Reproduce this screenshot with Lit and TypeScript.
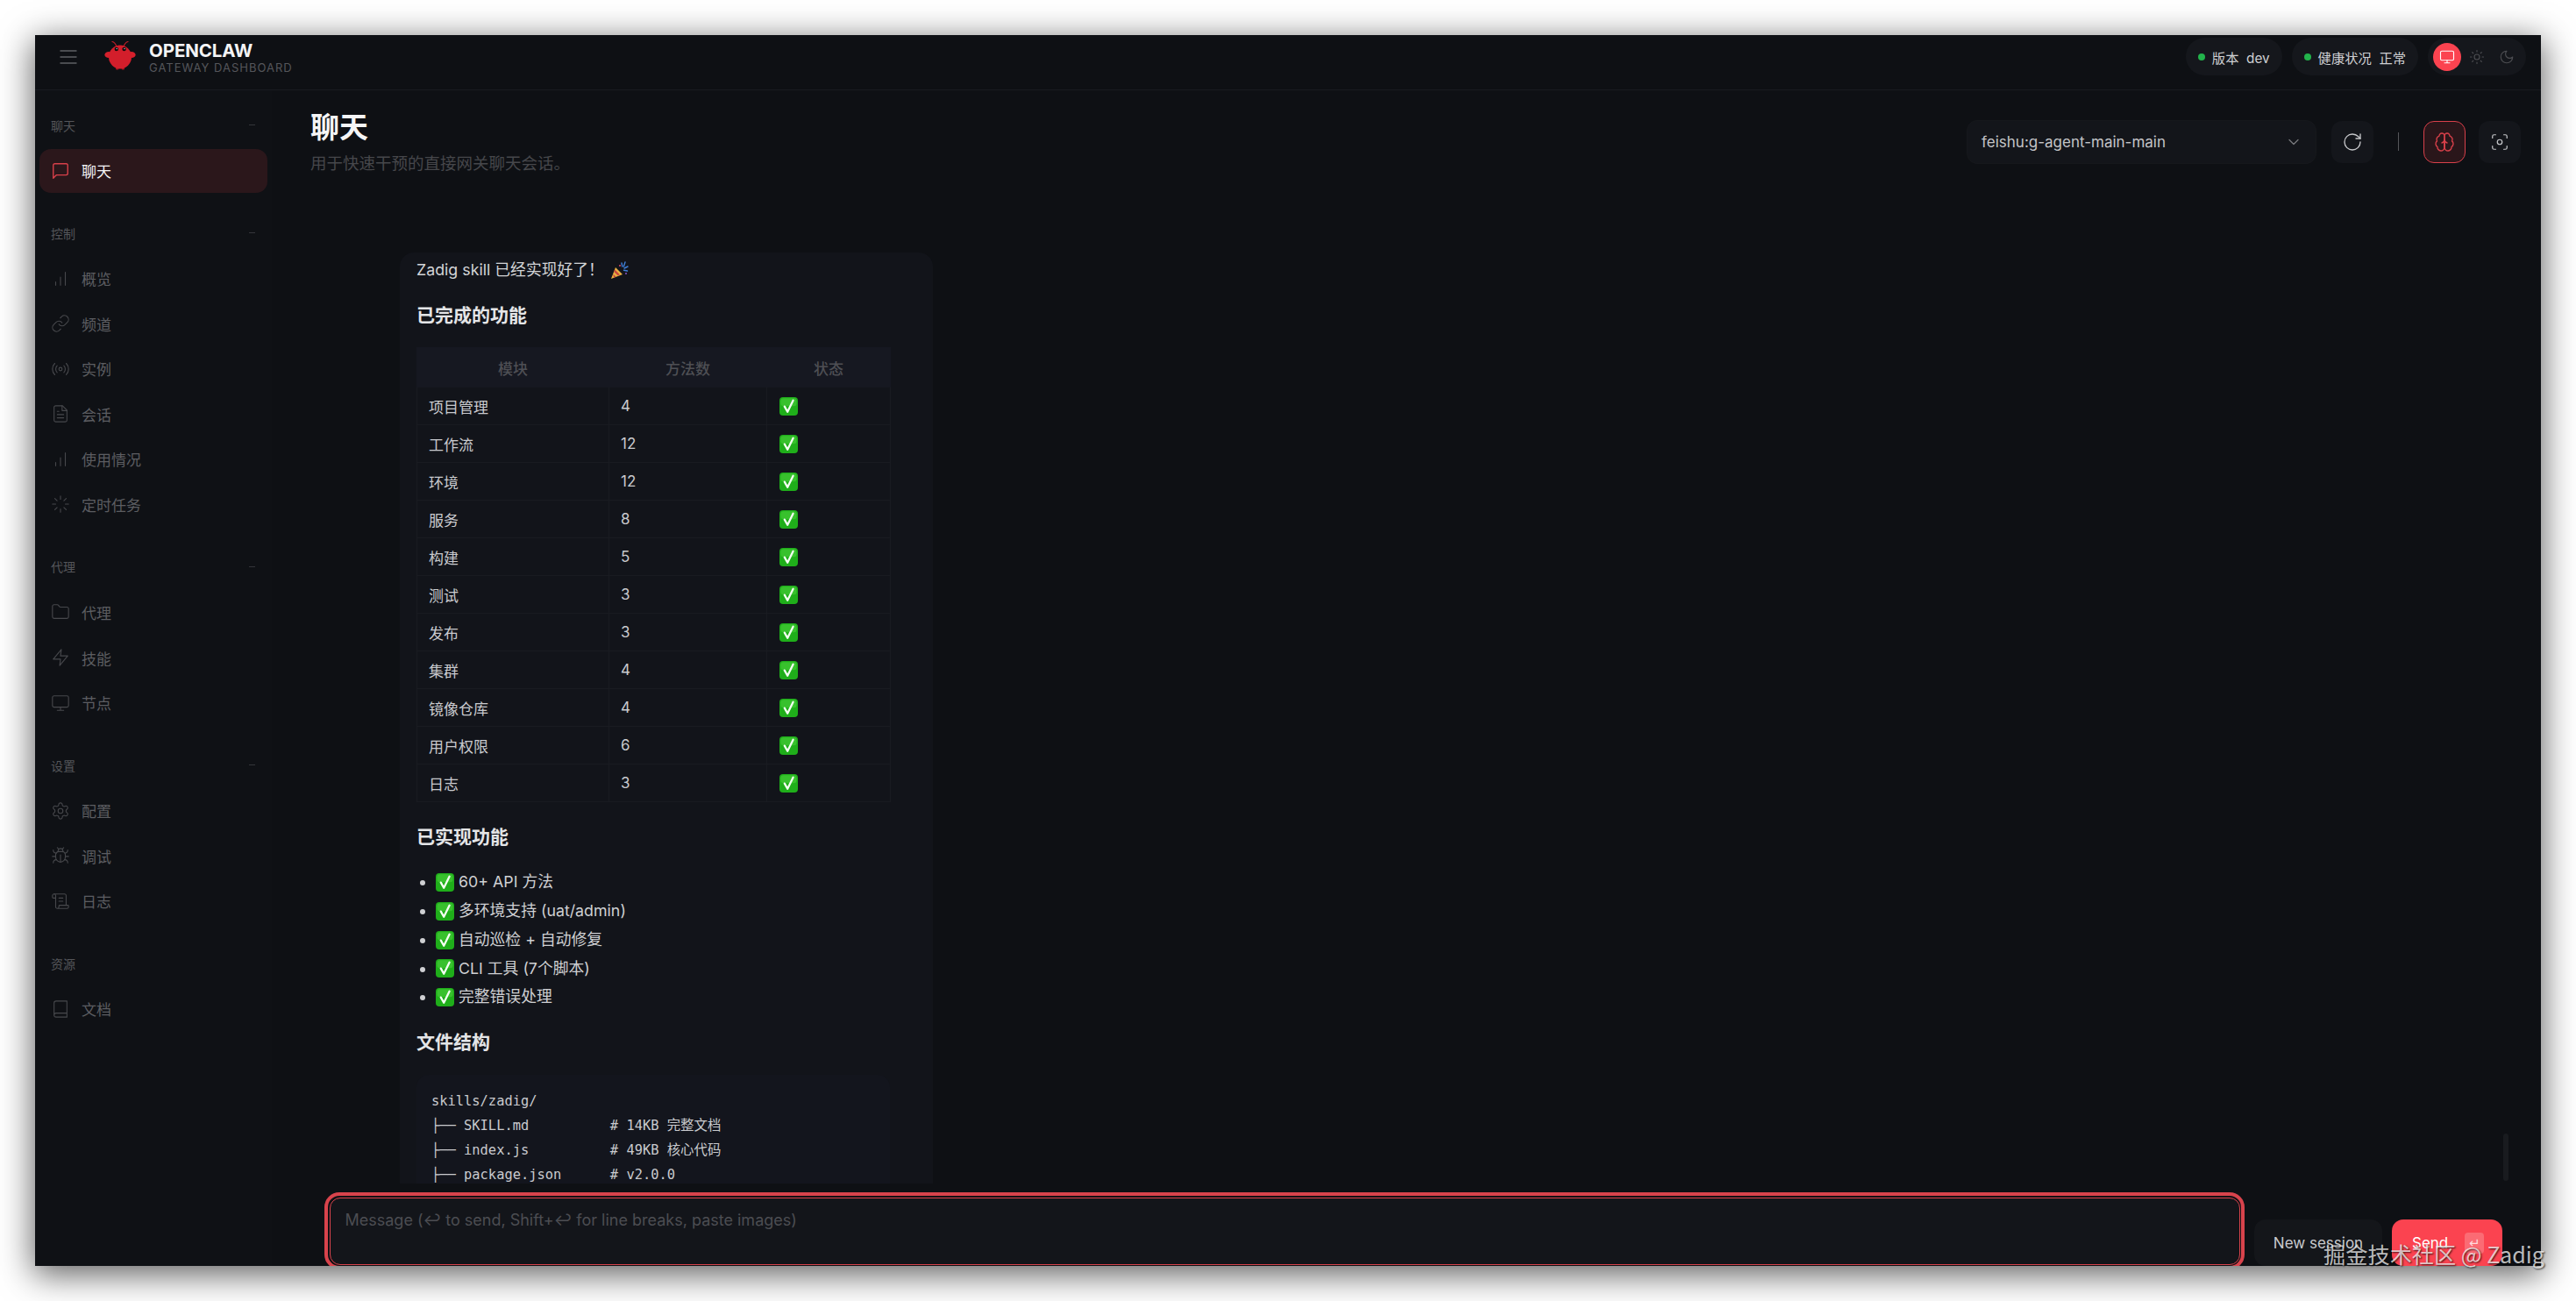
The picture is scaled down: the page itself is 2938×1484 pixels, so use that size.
import { LitElement, html, css, svg } from "lit";
import { customElement } from "lit/decorators.js";

const ICONS: Record<string, any> = {
  chat: svg`<path d="M21 15a2 2 0 0 1-2 2H7l-4 4V5a2 2 0 0 1 2-2h14a2 2 0 0 1 2 2z"/>`,
  bars: svg`<path d="M12 20V10M18 20V4M6 20v-4"/>`,
  link: svg`<path d="M10 13a5 5 0 0 0 7.54.54l3-3a5 5 0 0 0-7.07-7.07l-1.72 1.71"/><path d="M14 11a5 5 0 0 0-7.54-.54l-3 3a5 5 0 0 0 7.07 7.07l1.71-1.71"/>`,
  radio: svg`<path d="M4.9 19.1C1 15.2 1 8.8 4.9 4.9"/><path d="M7.8 16.2c-2.3-2.3-2.3-6.1 0-8.5"/><circle cx="12" cy="12" r="2"/><path d="M16.2 7.8c2.3 2.3 2.3 6.1 0 8.5"/><path d="M19.1 4.9C23 8.8 23 15.1 19.1 19"/>`,
  file: svg`<path d="M14.5 2H6a2 2 0 0 0-2 2v16a2 2 0 0 0 2 2h12a2 2 0 0 0 2-2V7.5L14.5 2z"/><path d="M14 2v6h6M16 13H8M16 17H8M10 9H8"/>`,
  loader: svg`<path d="M12 2v4M12 18v4M4.93 4.93l2.83 2.83M16.24 16.24l2.83 2.83M2 12h4M18 12h4M4.93 19.07l2.83-2.83M16.24 7.76l2.83-2.83"/>`,
  folder: svg`<path d="M4 20h16a2 2 0 0 0 2-2V8a2 2 0 0 0-2-2h-7.93a2 2 0 0 1-1.66-.9l-.82-1.2A2 2 0 0 0 7.93 3H4a2 2 0 0 0-2 2v13c0 1.1.9 2 2 2Z"/>`,
  zap: svg`<polygon points="13 2 3 14 12 14 11 22 21 10 12 10 13 2"/>`,
  monitor: svg`<rect x="2" y="3" width="20" height="14" rx="2"/><path d="M8 21h8M12 17v4"/>`,
  gear: svg`<path d="M12.22 2h-.44a2 2 0 0 0-2 2v.18a2 2 0 0 1-1 1.73l-.43.25a2 2 0 0 1-2 0l-.15-.08a2 2 0 0 0-2.73.73l-.22.38a2 2 0 0 0 .73 2.73l.15.1a2 2 0 0 1 1 1.72v.51a2 2 0 0 1-1 1.74l-.15.09a2 2 0 0 0-.73 2.73l.22.38a2 2 0 0 0 2.73.73l.15-.08a2 2 0 0 1 2 0l.43.25a2 2 0 0 1 1 1.73V20a2 2 0 0 0 2 2h.44a2 2 0 0 0 2-2v-.18a2 2 0 0 1 1-1.73l.43-.25a2 2 0 0 1 2 0l.15.08a2 2 0 0 0 2.73-.73l.22-.39a2 2 0 0 0-.73-2.73l-.15-.08a2 2 0 0 1-1-1.74v-.5a2 2 0 0 1 1-1.74l.15-.09a2 2 0 0 0 .73-2.73l-.22-.38a2 2 0 0 0-2.73-.73l-.15.08a2 2 0 0 1-2 0l-.43-.25a2 2 0 0 1-1-1.73V4a2 2 0 0 0-2-2z"/><circle cx="12" cy="12" r="3"/>`,
  bug: svg`<path d="M8 2l1.88 1.88M14.12 3.88 16 2M9 7.13v-1a3 3 0 1 1 6 0v1"/><path d="M12 20c-3.3 0-6-2.7-6-6v-3a4 4 0 0 1 4-4h4a4 4 0 0 1 4 4v3c0 3.3-2.7 6-6 6"/><path d="M12 20v-9M6.53 9C4.6 8.8 3 7.1 3 5M6 13H2M3 21c0-2.1 1.7-3.9 3.8-4M20.97 5c0 2.1-1.6 3.8-3.5 4M22 13h-4M17.2 17c2.1.1 3.8 1.9 3.8 4"/>`,
  scroll: svg`<path d="M15 12h-5M15 8h-5M19 17V5a2 2 0 0 0-2-2H4"/><path d="M8 21h12a2 2 0 0 0 2-2v-1a1 1 0 0 0-1-1H11a1 1 0 0 0-1 1v1a2 2 0 1 1-4 0V5a2 2 0 1 0-4 0v2a1 1 0 0 0 1 1h3"/>`,
  book: svg`<path d="M4 19.5v-15A2.5 2.5 0 0 1 6.5 2H20v20H6.5a2.5 2.5 0 0 1 0-5H20"/>`,
  refresh: svg`<path d="M21 12a9 9 0 1 1-9-9c2.52 0 4.93 1 6.74 2.74L21 8"/><path d="M21 3v5h-5"/>`,
  brain: svg`<path d="M12 5a3 3 0 1 0-5.997.125 4 4 0 0 0-2.526 5.77 4 4 0 0 0 .556 6.588A4 4 0 1 0 12 18Z"/><path d="M12 5a3 3 0 1 1 5.997.125 4 4 0 0 1 2.526 5.77 4 4 0 0 1-.556 6.588A4 4 0 1 1 12 18Z"/><path d="M15 13a4.5 4.5 0 0 1-3-4 4.5 4.5 0 0 1-3 4M12 18V9"/>`,
  focus: svg`<path d="M3 7V5a2 2 0 0 1 2-2h2M17 3h2a2 2 0 0 1 2 2v2M21 17v2a2 2 0 0 1-2 2h-2M7 21H5a2 2 0 0 1-2-2v-2"/><circle cx="12" cy="12" r="3"/>`,
  chevron: svg`<path d="m6 9 6 6 6-6"/>`,
  sun: svg`<circle cx="12" cy="12" r="4"/><path d="M12 2v2M12 20v2M4.93 4.93l1.41 1.41M17.66 17.66l1.41 1.41M2 12h2M20 12h2M6.34 17.66l-1.41 1.41M19.07 4.93l-1.41 1.41"/>`,
  moon: svg`<path d="M12 3a6 6 0 0 0 9 9 9 9 0 1 1-9-9Z"/>`,
  menu: svg`<path d="M3 5h18M3 12h18M3 19h18"/>`,
};

const icon = (name: string, cls = "") =>
  html`<svg class="ic ${cls}" viewBox="0 0 24 24" fill="none" stroke="currentColor" stroke-width="1.5" stroke-linecap="round" stroke-linejoin="round">${ICONS[name]}</svg>`;

const check = html`<svg class="emoji" viewBox="0 0 21 21"><rect width="21" height="21" rx="4" fill="#1fae1a"/><rect x="1.5" y="1.2" width="18" height="9" rx="3" fill="#4cd23e" opacity=".55"/><path d="M5.8 10.6l3.4 6.2L15.6 3.8" fill="none" stroke="#f4fff2" stroke-width="2.3" stroke-linecap="round" stroke-linejoin="round"/></svg>`;

const party = html`<svg class="party" viewBox="0 0 21 21"><path d="M1 20l5-13 8 8z" fill="#e8b040"/><path d="M3.2 14.5l3.4 3.2-2.4 1zM5.2 9.6l5.8 5.6-2.4 1-4.3-4.2z" fill="#c7453f"/><path d="M13 2l.8 4M17 1l-1.6 5M20 6l-4 2M19.5 11l-4-.8" stroke="#3f7fd8" stroke-width="1.4" fill="none" stroke-linecap="round"/><circle cx="11" cy="5" r="1" fill="#d8486a"/><circle cx="18" cy="14" r="1" fill="#8a55c8"/></svg>`;

const NAV = [
  { label: "聊天", items: [["chat", "聊天", true]] },
  { label: "控制", items: [["bars", "概览"], ["link", "频道"], ["radio", "实例"], ["file", "会话"], ["bars", "使用情况"], ["loader", "定时任务"]] },
  { label: "代理", items: [["folder", "代理"], ["zap", "技能"], ["monitor", "节点"]] },
  { label: "设置", items: [["gear", "配置"], ["bug", "调试"], ["scroll", "日志"]] },
  { label: "资源", noDash: true, items: [["book", "文档"]] },
] as { label: string; noDash?: boolean; items: any[][] }[];

const ROWS = [
  ["项目管理", "4"], ["工作流", "12"], ["环境", "12"], ["服务", "8"], ["构建", "5"], ["测试", "3"],
  ["发布", "3"], ["集群", "4"], ["镜像仓库", "4"], ["用户权限", "6"], ["日志", "3"],
];

const FEATURES = ["60+ API 方法", "多环境支持 (uat/admin)", "自动巡检 + 自动修复", "CLI 工具 (7个脚本)", "完整错误处理"];

const CODE = `skills/zadig/
├── SKILL.md          # 14KB 完整文档
├── index.js          # 49KB 核心代码
├── package.json      # v2.0.0`;

@customElement("app-root")
export class AppRoot extends LitElement {
  static styles = css`
    :host {
      display: block;
      position: relative;
      height: 100vh;
      box-sizing: border-box;
      padding: 40px;
      background: #fff;
      overflow: hidden;
      font-family: Inter, "Noto Sans CJK SC", sans-serif;
      color: #d6d7da;
    }
    * { box-sizing: border-box; }
    .window {
      height: 1404px;
      display: flex;
      flex-direction: column;
      overflow: hidden;
      background: #0e1014;
      box-shadow: 0 8px 36px 2px rgba(0, 0, 0, 0.62);
    }
    .ic { display: block; width: 20px; height: 20px; flex: none; }

    /* header */
    .topbar {
      flex: none;
      height: 63px;
      display: flex;
      align-items: center;
      padding: 0 17px 13px 26px;
      border-bottom: 1px solid #191b20;
    }
    .menu { width: 24px; height: 24px; color: #5f6064; }
    .logo { width: 38px; height: 36px; margin: 0 0 4px 28px; flex: none; }
    .brand { margin: 4px 0 0 14px; display: flex; flex-direction: column; }
    .brand b { font-size: 20.5px; line-height: 22px; font-weight: 700; color: #f4f4f5; letter-spacing: -0.1px; }
    .brand span { font-size: 13px; line-height: 17px; letter-spacing: 1px; color: #55565b; }
    .spacer { flex: 1; }
    .pill {
      height: 43px;
      display: flex;
      align-items: center;
      gap: 8px;
      padding: 0 14px;
      border-radius: 22px;
      background: #15171c;
      font-size: 15.3px;
      color: #cfd0d3;
      margin-right: 11px;
      white-space: pre;
    }
    .dot { width: 8px; height: 8px; border-radius: 50%; background: #22b34b; }
    .theme {
      height: 43px;
      width: 112px;
      display: flex;
      align-items: center;
      gap: 2px;
      padding: 0 6px;
      border-radius: 22px;
      background: #15171c;
    }
    .theme span { width: 32px; height: 32px; border-radius: 50%; display: grid; place-items: center; color: #4d4e52; }
    .theme span .ic { width: 18px; height: 18px; }
    .theme .on { background: #fb4350; color: #fff; }

    /* body */
    .body { flex: 1; min-height: 0; display: flex; }
    .side { flex: none; width: 270px; padding: 25.5px 5px 0; background: #0f1115; }
    .group { margin-bottom: 32px; }
    .group-label {
      height: 28px;
      margin-bottom: 13px;
      padding: 0 14px 0 13px;
      display: flex;
      align-items: center;
      justify-content: space-between;
      font-size: 14px;
      color: #55565a;
    }
    .group-label i { width: 7px; height: 1px; background: #34353a; }
    .item {
      height: 50px;
      margin-bottom: 1.6px;
      padding-left: 13px;
      display: flex;
      align-items: center;
      gap: 13px;
      font-size: 17px;
      color: #5c5d61;
      border-radius: 13px;
    }
    .item .ic { width: 22px; height: 22px; color: #47484c; stroke-width: 1.2; }
    .item.active { background: #2b171b; color: #f5f5f6; }
    .item.active .ic { color: #d8404a; stroke-width: 1.5; }

    .main { position: relative; flex: 1; min-width: 0; display: flex; flex-direction: column; }
    .head {
      flex: none;
      display: flex;
      align-items: center;
      justify-content: space-between;
      padding: 22px 23px 0 44px;
    }
    .head h1 { margin: 0; font-size: 33px; line-height: 40px; font-weight: 600; color: #f5f5f6; }
    .head p { margin: 9px 0 0; font-size: 18.5px; line-height: 24px; color: #46474b; }
    .controls { display: flex; align-items: center; }
    .select {
      width: 399px;
      height: 50px;
      display: flex;
      align-items: center;
      justify-content: space-between;
      padding: 0 15px 0 16px;
      border-radius: 12px;
      border: 1px solid #16181c;
      background: #13151a;
      font-size: 17px;
      color: #c3c4c7;
    }
    .select .ic { width: 20px; height: 20px; color: #77787c; }
    .btn {
      width: 48px;
      height: 48px;
      display: grid;
      place-items: center;
      border-radius: 12px;
      background: #14161b;
      color: #c5c6c9;
    }
    .btn .ic { width: 24px; height: 24px; stroke-width: 1.35; }
    .btn.refresh { margin-left: 17px; }
    .sep { width: 1px; height: 21px; margin: 0 28px; background: #55565a; }
    .btn.brain { background: #2a161a; border: 1px solid #d8404a; color: #d8404a; }
    .btn.scan { margin-left: 15px; }
    .btn.scan .ic { width: 22px; height: 22px; }

    .thread { position: relative; flex: 1; min-height: 0; overflow: hidden; padding: 90px 0 0 146px; }
    .card { width: 608px; padding: 6px 49px 20px 19px; border-radius: 16px; background: #12141a; font-size: 17.8px; color: #d3d4d7; }
    .lead { line-height: 28px; display: flex; align-items: center; gap: 7px; }
    .party { width: 21px; height: 21px; flex: none; }
    .emoji { width: 21px; height: 21px; display: inline-block; flex: none; vertical-align: middle; }
    .card h3 { margin: 23px 0; font-size: 21px; line-height: 30px; font-weight: 600; color: #e4e5e7; }
    .card h3.first { margin-bottom: 21px; }
    .card h3.second { margin-top: 24.5px; margin-bottom: 22px; }
    table { width: 540px; table-layout: fixed; border-collapse: collapse; font-size: 17px; }
    th, td { padding: 0 13px; border: 1px solid #191b21; }
    th { height: 45px; font-weight: 500; color: #4e4f54; background: #161821; text-align: center; border-color: #161821; }
    td { height: 43px; color: #c9cace; }
    td .emoji { display: block; margin-left: 1px; }
    ul { margin: -1.4px 0 -3px; padding: 0 0 0 22px; }
    li { height: 32.8px; line-height: 32.8px; color: #cfd0d3; }
    li .row { display: inline-flex; align-items: center; gap: 5px; vertical-align: top; height: 32.8px; }
    pre {
      margin: -1px 0 0;
      padding: 16px 17px 20px;
      border-radius: 14px;
      background: #13151d;
      font-family: "DejaVu Sans Mono", "Noto Sans CJK SC", monospace;
      font-size: 15.4px;
      line-height: 28px;
      color: #c9cace;
    }
    .scrollbar { position: absolute; top: 1190px; right: 37px; width: 6px; height: 54px; border-radius: 3px; background: #191b1f; }

    /* composer */
    .composer { flex: none; height: 84px; margin-top: 10px; padding: 0 44px 0 60px; display: flex; gap: 11px; align-items: flex-start; }
    .input {
      flex: 1;
      height: 88px;
      padding: 1.5px;
      border: 4px solid #d8434c;
      border-radius: 17px;
    }
    .input div {
      height: 100%;
      border: 1px solid #d8434c;
      border-radius: 12px;
      background: #13151a;
      padding: 13px 17px;
      font-size: 18px;
      line-height: 24px;
      color: #4c4d52;
      white-space: pre;
    }
    .action {
      flex: none;
      margin-top: 31px;
      height: 53px;
      border-radius: 13px;
      display: flex;
      align-items: center;
      font-size: 17px;
    }
    .new { width: 146px; justify-content: center; background: #14161a; color: #c9cace; }
    .send { width: 126px; padding-left: 23px; gap: 19px; background: #fb4350; color: #fff; }
    .send kbd { width: 22px; height: 24px; border-radius: 4px; background: #fb6b74; display: grid; place-items: center; font: 15px "DejaVu Sans", sans-serif; color: #ffd9dc; }

    .watermark {
      position: absolute;
      right: 36px;
      top: 1412px;
      font-family: "Noto Sans CJK SC", sans-serif;
      font-size: 25.2px;
      line-height: 36px;
      color: rgba(255, 255, 255, 0.72);
      text-shadow: 1px 1px 2px rgba(0, 0, 0, 0.75);
      white-space: pre;
    }
  `;

  render() {
    return html`
      <div class="window">
        <header class="topbar">
          <svg class="ic menu" viewBox="0 0 24 24" fill="none" stroke="currentColor" stroke-width="1.4" stroke-linecap="round">${ICONS.menu}</svg>
          <svg class="logo" viewBox="8 6 38 36">
            <path d="M23 14Q21 9 18 8.5M31 14Q33 9 36 8.5" stroke="#c41f2a" stroke-width="1.2" fill="none" stroke-linecap="round"/>
            <ellipse cx="14" cy="23.5" rx="4.6" ry="3.6" fill="#d5202c"/>
            <ellipse cx="40" cy="23.5" rx="4.6" ry="3.6" fill="#d5202c"/>
            <rect x="22" y="35" width="3.4" height="5.4" rx="1" fill="#a81520"/>
            <rect x="28.6" y="35" width="3.4" height="5.4" rx="1" fill="#a81520"/>
            <ellipse cx="27" cy="26" rx="13" ry="13.4" fill="#d31e2b"/>
            <circle cx="22.8" cy="17" r="2.2" fill="#15090b"/>
            <circle cx="31.6" cy="17" r="2.2" fill="#15090b"/>
            <circle cx="23.2" cy="16.5" r=".7" fill="#9fd8d8"/>
            <circle cx="32" cy="16.5" r=".7" fill="#9fd8d8"/>
          </svg>
          <div class="brand"><b>OPENCLAW</b><span>GATEWAY DASHBOARD</span></div>
          <div class="spacer"></div>
          <div class="pill"><i class="dot"></i><span>版本  dev</span></div>
          <div class="pill"><i class="dot"></i><span>健康状况  正常</span></div>
          <div class="theme">
            <span class="on">${icon("monitor")}</span>
            <span>${icon("sun")}</span>
            <span>${icon("moon")}</span>
          </div>
        </header>
        <div class="body">
          <nav class="side">
            ${NAV.map(
              (g) => html`<div class="group">
                <div class="group-label"><span>${g.label}</span>${g.noDash ? "" : html`<i></i>`}</div>
                ${g.items.map(
                  ([ic, text, active]) => html`<div class="item ${active ? "active" : ""}">${icon(ic)}<span>${text}</span></div>`
                )}
              </div>`
            )}
          </nav>
          <main class="main">
            <div class="head">
              <div>
                <h1>聊天</h1>
                <p>用于快速干预的直接网关聊天会话。</p>
              </div>
              <div class="controls">
                <div class="select"><span>feishu:g-agent-main-main</span>${icon("chevron")}</div>
                <div class="btn refresh">${icon("refresh")}</div>
                <div class="sep"></div>
                <div class="btn brain">${icon("brain")}</div>
                <div class="btn scan">${icon("focus")}</div>
              </div>
            </div>
            <section class="thread">
              <article class="card">
                <div class="lead"><span>Zadig skill 已经实现好了！</span>${party}</div>
                <h3 class="first">已完成的功能</h3>
                <table>
                  <colgroup><col style="width:219px" /><col style="width:180px" /><col style="width:141px" /></colgroup>
                  <thead><tr><th>模块</th><th>方法数</th><th>状态</th></tr></thead>
                  <tbody>
                    ${ROWS.map(([a, b]) => html`<tr><td>${a}</td><td>${b}</td><td>${check}</td></tr>`)}
                  </tbody>
                </table>
                <h3 class="second">已实现功能</h3>
                <ul>
                  ${FEATURES.map((f) => html`<li><span class="row">${check}<span>${f}</span></span></li>`)}
                </ul>
                <h3>文件结构</h3>
                <pre>${CODE}</pre>
              </article>
            </section>
            <div class="scrollbar"></div>
            <div class="composer">
              <div class="input"><div>Message (↩ to send, Shift+↩ for line breaks, paste images)</div></div>
              <div class="action new">New session</div>
              <div class="action send"><span>Send</span><kbd>↵</kbd></div>
            </div>
          </main>
        </div>
      </div>
      <div class="watermark">掘金技术社区 @ Zadig</div>
    `;
  }
}
